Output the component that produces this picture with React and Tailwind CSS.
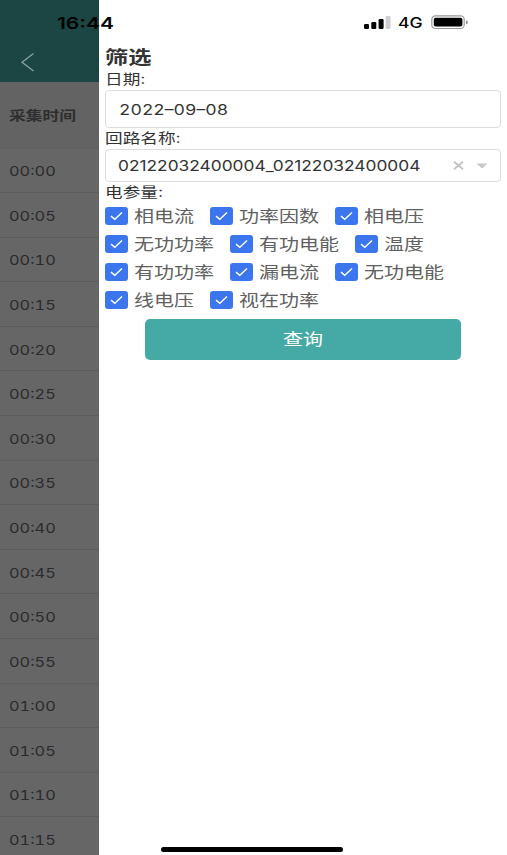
import React, { useState } from 'react';

const TIMES = [
    '00:00', '00:05', '00:10', '00:15', '00:20', '00:25', '00:30', '00:35',
    '00:40', '00:45', '00:50', '00:55', '01:00', '01:05', '01:10', '01:15',
];

const PARAM_ROWS = [
    ['相电流', '功率因数', '相电压'],
    ['无功功率', '有功电能', '温度'],
    ['有功功率', '漏电流', '无功电能'],
    ['线电压', '视在功率'],
];

function StatusBar() {
    return (
        <div className="absolute inset-x-0 top-0 z-20 h-[46px] text-black pointer-events-none">
            <span className="absolute left-[57px] top-[12px] h-[22px] leading-[22px] text-[16px] font-semibold origin-left scale-x-[1.31]">16:44</span>
            <svg className="absolute left-[364px] top-[15px]" width="27" height="15" viewBox="0 0 27 15">
                <rect x="0" y="9" width="5" height="5" rx="1.2" />
                <rect x="7.3" y="7" width="5" height="7" rx="1.2" />
                <rect x="14.6" y="4" width="5" height="10" rx="1.2" />
                <rect x="21.6" y="1" width="5" height="13" rx="1.2" fill="#cfcfcf" />
            </svg>
            <span className="absolute left-[398px] top-[13px] h-[20px] leading-[20px] text-[14px] font-medium origin-left scale-x-[1.25]">4G</span>
            <svg className="absolute left-[431px] top-[15px]" width="38" height="15" viewBox="0 0 38 15">
                <rect x="0.8" y="0.9" width="32.4" height="12.6" rx="3.6" fill="none" stroke="#9a9a9a" strokeWidth="1.2" />
                <rect x="2.8" y="2.8" width="28.6" height="8.8" rx="1.8" />
                <path d="M35 5.200c1.300.5 1.800 1.200 1.800 2.100S36.300 9 35 9.500z" fill="#8a8a8a" />
            </svg>
        </div>
    );
}

// Data table behind the drawer, already dimmed
function TimeColumn() {
    return (
        <div className="w-[99px] shrink-0 h-full overflow-hidden bg-[#666666] flex flex-col">
            <div className="h-[82px] shrink-0 bg-[#1b4643] pt-[52px] pl-[20px]">
                <svg width="15" height="20" viewBox="0 0 15 20" fill="none" stroke="#8fa6a4" strokeWidth="1.2">
                    <path d="M13.500 1.500L2 10.300L13.500 19" />
                </svg>
            </div>
            <div className="h-[66.500px] shrink-0 bg-[#636363] border-b border-[#606060] flex items-center pt-[2px] pl-[9px]">
                <span className="text-[13px] font-semibold text-[#2e2e2e] whitespace-nowrap origin-left scale-x-[1.29]">采集时间</span>
            </div>
            {TIMES.map((time) => (
                <div key={time} className="h-[44.600px] shrink-0 border-b border-[#5c5c5c] flex items-center pt-[2px] pl-[9px]">
                    <span className="text-[13.500px] tabular-nums text-[#2b2b2b] whitespace-nowrap origin-left scale-x-[1.21]">{time}</span>
                </div>
            ))}
        </div>
    );
}

function FieldLabel({ children }) {
    return (
        <div className="h-[20px] leading-[20px] text-[14px] text-[#333333]">
            <span className="inline-block whitespace-nowrap origin-left scale-x-[1.26]">{children}</span>
        </div>
    );
}

function ParamCheckbox({ label, checked, onToggle }) {
    return (
        <button type="button" onClick={onToggle} className="flex items-center mr-4 cursor-pointer">
            <span className={`w-[23px] h-[18px] rounded-[3px] flex items-center justify-center ${checked ? 'bg-[#3b76ee]' : 'bg-white border border-[#c8c9cc]'}`}>
                {checked && (
                    <svg width="13" height="10" viewBox="0 0 13 10" fill="none" stroke="#ffffff" strokeWidth="1.4">
                        <path d="M1 5.100L4.800 8.300L12 1.500" />
                    </svg>
                )}
            </span>
            {/* each glyph takes 20px once stretched */}
            <span className={`ml-[5.500px] mr-[0.500px] h-[24px] leading-[24px] text-left text-[16px] text-[#606060] ${label.length === 2 ? 'w-[40px]' : label.length === 3 ? 'w-[60px]' : 'w-[80px]'}`}>
                <span className="inline-block whitespace-nowrap origin-left scale-x-[1.25]">{label}</span>
            </span>
        </button>
    );
}

export default function App() {
    const [unchecked, setUnchecked] = useState([]);

    const toggle = (label) => {
        setUnchecked((prev) => (prev.includes(label) ? prev.filter((l) => l !== label) : [...prev, label]));
    };

    return (
        <div className="relative w-[507px] h-[855px] overflow-hidden bg-white flex font-['Inter','Noto_Sans_CJK_SC',sans-serif]">
            <StatusBar />
            <TimeColumn />

            <div className="flex-1 h-full bg-white pt-[46px] pl-[6px] pr-[6px] flex flex-col">
                <h1 className="h-[23px] leading-[22px] text-[18.500px] font-bold text-[#333333]">
                    <span className="inline-block whitespace-nowrap origin-left scale-x-[1.26]">筛选</span>
                </h1>

                <FieldLabel>日期:</FieldLabel>
                <div className="mt-px h-[38px] border border-[#dddddd] rounded-[4px] flex items-center pl-[13px]">
                    <span className="text-[14px] tabular-nums text-[#333333] whitespace-nowrap origin-left scale-x-[1.26]">2022–09–08</span>
                </div>

                <FieldLabel>回路名称:</FieldLabel>
                <div className="mt-px h-[33px] border border-[#dddddd] rounded-[4px] flex items-center pl-[12px] pr-[12px]">
                    <span className="w-[335px] text-[14px] text-[#333333] whitespace-nowrap">
                        <span className="inline-block origin-left scale-x-[1.237]">02122032400004_02122032400004</span>
                    </span>
                    <svg width="11" height="9" viewBox="0 0 11 9" fill="none" stroke="#c2c2c2" strokeWidth="1.8">
                        <path d="M1 0.800L10 8.200M10 0.800L1 8.200" />
                    </svg>
                    <svg className="ml-[12px]" width="12" height="6" viewBox="0 0 12 6" fill="#c8c8c8">
                        <path d="M0.500 0.500H11.500L6 5.500Z" />
                    </svg>
                </div>

                <FieldLabel>电参量:</FieldLabel>
                <div className="pt-[0.500px]">
                    {PARAM_ROWS.map((row) => (
                        <div key={row[0]} className="flex items-center h-[27.800px]">
                            {row.map((label) => (
                                <ParamCheckbox key={label} label={label} checked={!unchecked.includes(label)} onToggle={() => toggle(label)} />
                            ))}
                        </div>
                    ))}
                </div>

                <button type="button" className="mt-[5px] ml-[40px] w-[316px] h-[41px] rounded-[5px] bg-[#45aaa6] text-white text-[16px] flex items-center justify-center cursor-pointer">
                    <span className="scale-x-[1.25]">查询</span>
                </button>

                <div className="mt-auto mb-[3px] ml-[56px] w-[182px] h-[5px] rounded-full bg-black" />
            </div>
        </div>
    );
}
